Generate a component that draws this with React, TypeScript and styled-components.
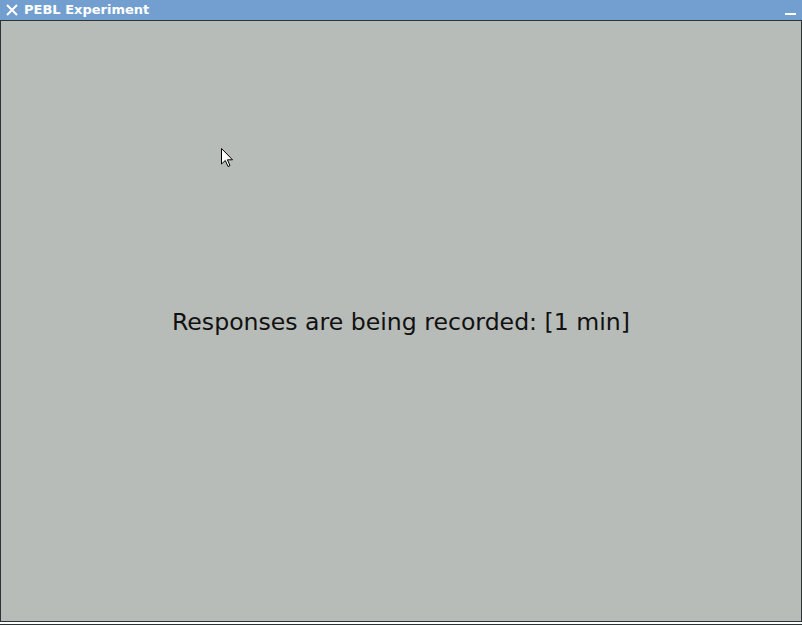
import styled, { createGlobalStyle } from "styled-components";

const GlobalStyle = createGlobalStyle`
  html, body {
    margin: 0;
    padding: 0;
    background: #ffffff;
    overflow: hidden;
  }
`;

const Frame = styled.div`
  width: 802px;
  height: 626px;
  display: flex;
  flex-direction: column;
  box-sizing: border-box;
  font-family: "DejaVu Sans", sans-serif;
`;

const TitleBar = styled.div`
  height: 20px;
  flex: none;
  display: flex;
  align-items: center;
  background: #729fcf;
  border-bottom: 1px solid #2e3436;
  padding: 0 6px;
  gap: 6px;
`;

const Title = styled.span`
  flex: 1;
  color: #ffffff;
  font-size: 13px;
  font-weight: bold;
  line-height: 20px;
`;

const Body = styled.div`
  position: relative;
  flex: 1;
  display: flex;
  align-items: center;
  justify-content: center;
  background: #b8bcb8;
  border-left: 1px solid #2e3436;
  border-right: 1px solid #2e3436;
  border-bottom: 1px solid #2e3436;
`;

const Message = styled.div`
  color: #111111;
  font-size: 23.6px;
  margin-top: 1px;
`;

const BottomEdge = styled.div`
  height: 2px;
  flex: none;
  background: #ffffff;
  border-bottom: 1px solid #2e3436;
  margin-bottom: 1px;
`;

const Cursor = styled.svg`
  position: absolute;
  left: 219px;
  top: 126px;
`;

const CloseIcon = () => (
  <svg width="12" height="12" viewBox="0 0 12 12">
    <path d="M1 1L11 11M11 1L1 11" stroke="#ffffff" strokeWidth="2" />
  </svg>
);

const MinimizeIcon = () => (
  <svg width="11" height="12" viewBox="0 0 11 12">
    <rect x="0" y="9" width="11" height="2" fill="#ffffff" />
  </svg>
);

export default function App() {
  return (
    <>
      <GlobalStyle />
      <Frame>
        <TitleBar>
          <CloseIcon />
          <Title>PEBL Experiment</Title>
          <MinimizeIcon />
        </TitleBar>
        <Body>
          <Cursor width="15" height="21" viewBox="0 0 15 21">
            <path
              d="M1.5 1.5L1.5 17L5.3 13.5L8 19.5L10 18.6L7.4 12.8L12.5 12.8Z"
              fill="#ffffff"
              stroke="#000000"
              strokeWidth="1"
              strokeLinejoin="miter"
            />
          </Cursor>
          <Message>Responses are being recorded: [1 min]</Message>
        </Body>
        <BottomEdge />
      </Frame>
    </>
  );
}
